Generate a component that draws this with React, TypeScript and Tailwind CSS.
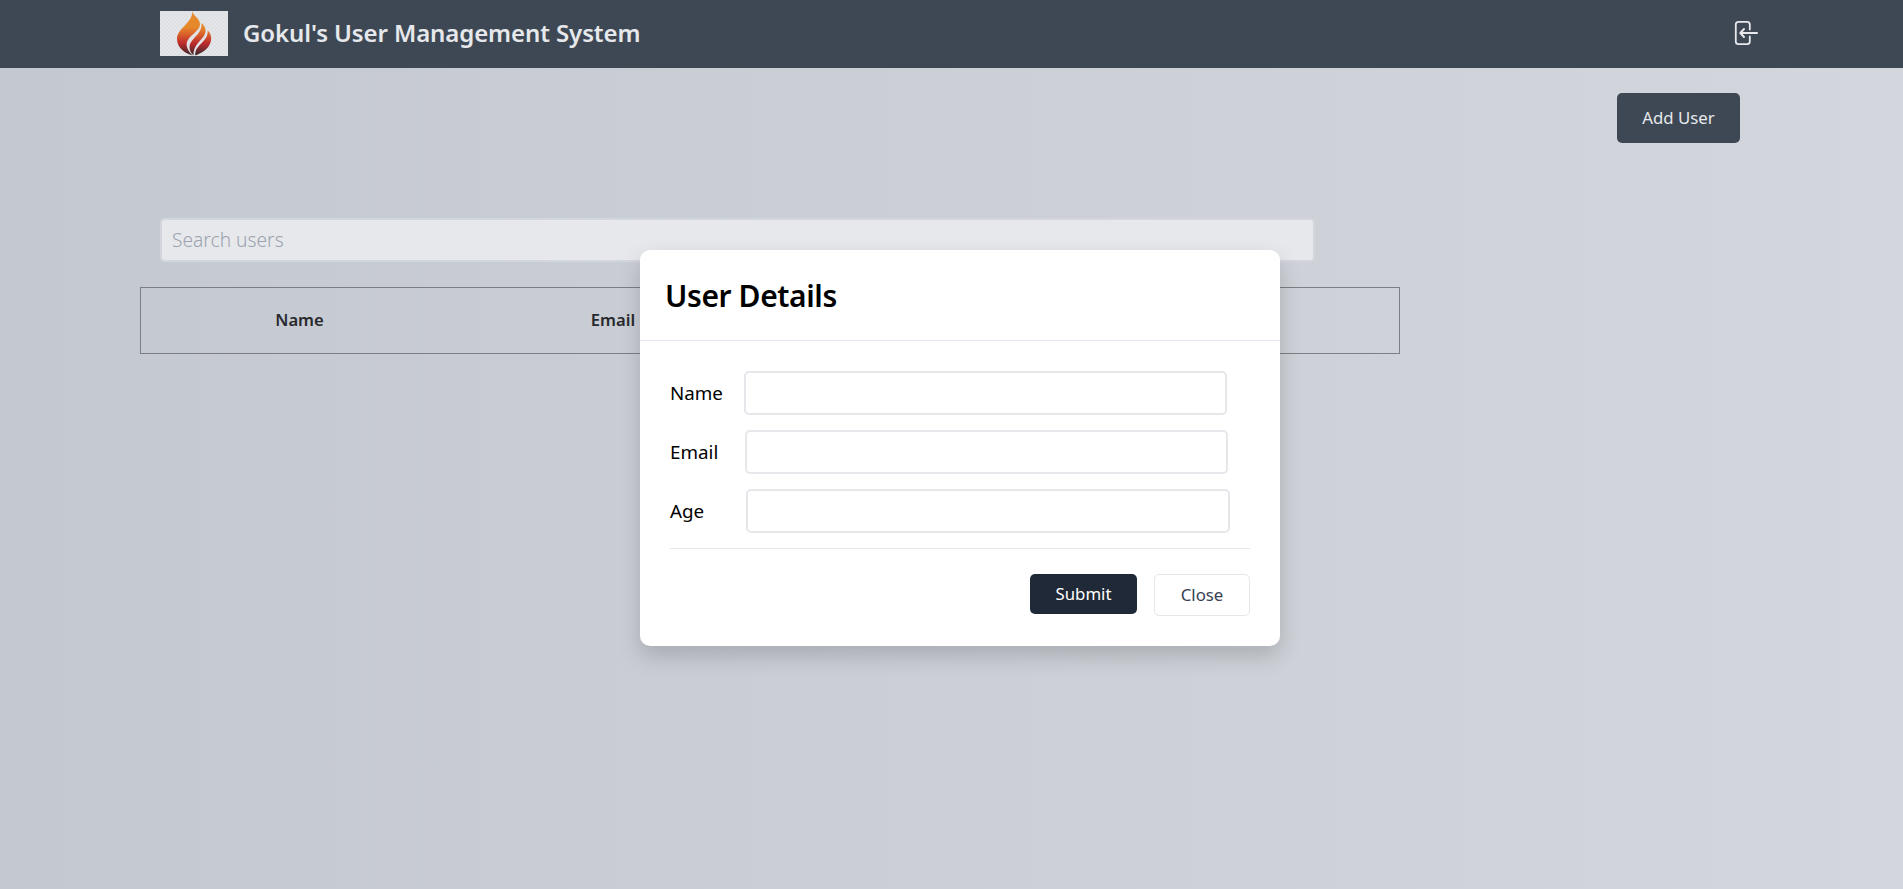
import React from "react";

function FlameLogo() {
  return (
    <svg viewBox="0 0 68 45" className="h-[45px] w-[68px] shrink-0">
      <defs>
        <linearGradient id="flame" x1="0" y1="0" x2="0" y2="45" gradientUnits="userSpaceOnUse">
          <stop offset="0.36" stopColor="#e6892b" />
          <stop offset="0.52" stopColor="#d9602b" />
          <stop offset="0.72" stopColor="#bd2a2c" />
          <stop offset="0.88" stopColor="#6a2a2c" />
          <stop offset="1" stopColor="#33282b" />
        </linearGradient>
        <pattern id="checker" width="4" height="4" patternUnits="userSpaceOnUse">
          <rect width="4" height="4" fill="#e4e5e8" />
          <path d="M0 0h2v2H0zM2 2h2v2H2z" fill="#dfe0e4" />
        </pattern>
      </defs>
      <rect width="68" height="45" fill="url(#checker)" />
      <g fill="url(#flame)">
        <path d="M32.3 0C33 5 40.5 7.500 40 14C39.600 20 28 25 26.700 32C26 37 29.500 41.500 32.500 44.500C25 42.500 17 36.500 17 28C17 17 33 12 32.300 0Z" />
        <path d="M41.500 12C46 16 47 20.500 43.500 25.500C40 30.500 33 35 33.500 44.500C29.500 41 28.500 36 30.500 32C34 25.500 42.500 21.500 41.500 12Z" />
        <path d="M47.700 19.500C51 22.500 52 27 50.500 31.500C48.500 38 42 42 35.300 44.500C34.500 33.500 48.500 31 47.700 19.500Z" />
      </g>
    </svg>
  );
}

function ExitIcon() {
  return (
    <svg viewBox="0 0 24 26" className="mb-px h-[26px] w-6" fill="none" stroke="#e6e8eb" strokeLinecap="round" strokeLinejoin="round">
      <path d="M15.800 9.500V4.500Q15.800 1.800 13.100 1.800H4.500Q1.800 1.800 1.800 4.500V21.500Q1.800 24.200 4.500 24.200H13.100Q15.800 24.200 15.800 21.500V16.500" strokeWidth="1.800" />
      <path d="M23 13H6.500M10 9L6.300 13L10 17" strokeWidth="2" />
    </svg>
  );
}

function Field({ label, width, gap }: { label: string; width: string; gap: string }) {
  return (
    <div className="flex h-11 items-center">
      <label className={`shrink-0 text-[18.800px] font-[450] text-black ${gap}`}>{label}</label>
      <input className={`h-11 rounded-[5px] border-2 border-[#e5e7eb] bg-white px-2 outline-none ${width}`} />
    </div>
  );
}

export default function App() {
  return (
    <div className="relative h-[889px] w-full overflow-hidden bg-linear-to-r from-[#c4c8d0] to-[#d3d6dc] font-['Noto_Sans',sans-serif]">
      <header className="flex h-[68px] items-center justify-between bg-[#3e4855] pb-px pl-40 pr-[145px]">
        <div className="flex items-center gap-[15px]">
          <FlameLogo />
          <h1 className="pb-[2px] text-[24px] leading-8 font-semibold tracking-[-0.1px] whitespace-nowrap text-[#e6e8eb]">Gokul's User Management System</h1>
        </div>
        <ExitIcon />
      </header>

      <div className="flex justify-end pt-[25px] pr-[163px]">
        <button className="h-[50px] w-[123px] rounded-[5px] bg-[#3e4855] text-[16.800px] text-[#e6e8eb]">Add User</button>
      </div>

      <main className="ml-[140px] w-[1260px] pt-[75px]">
        <input
          className="ml-5 block h-11 w-[1155px] rounded-[5px] border-2 border-[#d3d6dc] bg-[#e6e8eb] px-[10px] pb-px text-[19.200px] font-light outline-none placeholder:text-[#9ca3af]"
          placeholder="Search users"
        />
        <div className="mt-[25px] flex h-[67px] items-center border border-[#7b7e84] pb-px text-[16.600px] font-semibold text-[#27292c]">
          <div className="w-[317px] text-center">Name</div>
          <div className="w-[310px] text-center">Email</div>
        </div>
      </main>

      <section className="absolute top-[250px] left-[640px] h-[396px] w-[640px] rounded-[10px] bg-white shadow-[0_10px_22px_rgba(0,0,0,0.17)]">
        <div className="flex h-[91px] items-center border-b border-[#e2e8f0] px-[25px] pt-px">
          <h2 className="text-[30px] leading-9 font-semibold tracking-[-0.4px] text-black">User Details</h2>
        </div>
        <form className="px-[30px] pt-[30px]">
          <div className="flex flex-col gap-[15px]">
            <Field label="Name" gap="w-[74px]" width="w-[483px]" />
            <Field label="Email" gap="w-[75px]" width="w-[483px]" />
            <Field label="Age" gap="w-[76px]" width="w-[484px]" />
          </div>
          <div className="mt-[15px] flex items-start justify-end gap-[17px] border-t border-[#e5e7eb] pt-[25px]">
            <button type="button" className="h-10 w-[107px] rounded-[5px] bg-[#1f2937] pb-px text-[16.800px] text-white">Submit</button>
            <button type="button" className="h-[42px] w-24 rounded-[5px] border border-[#e5e7eb] bg-white pb-px text-[16.800px] text-[#374151]">Close</button>
          </div>
        </form>
      </section>
    </div>
  );
}
